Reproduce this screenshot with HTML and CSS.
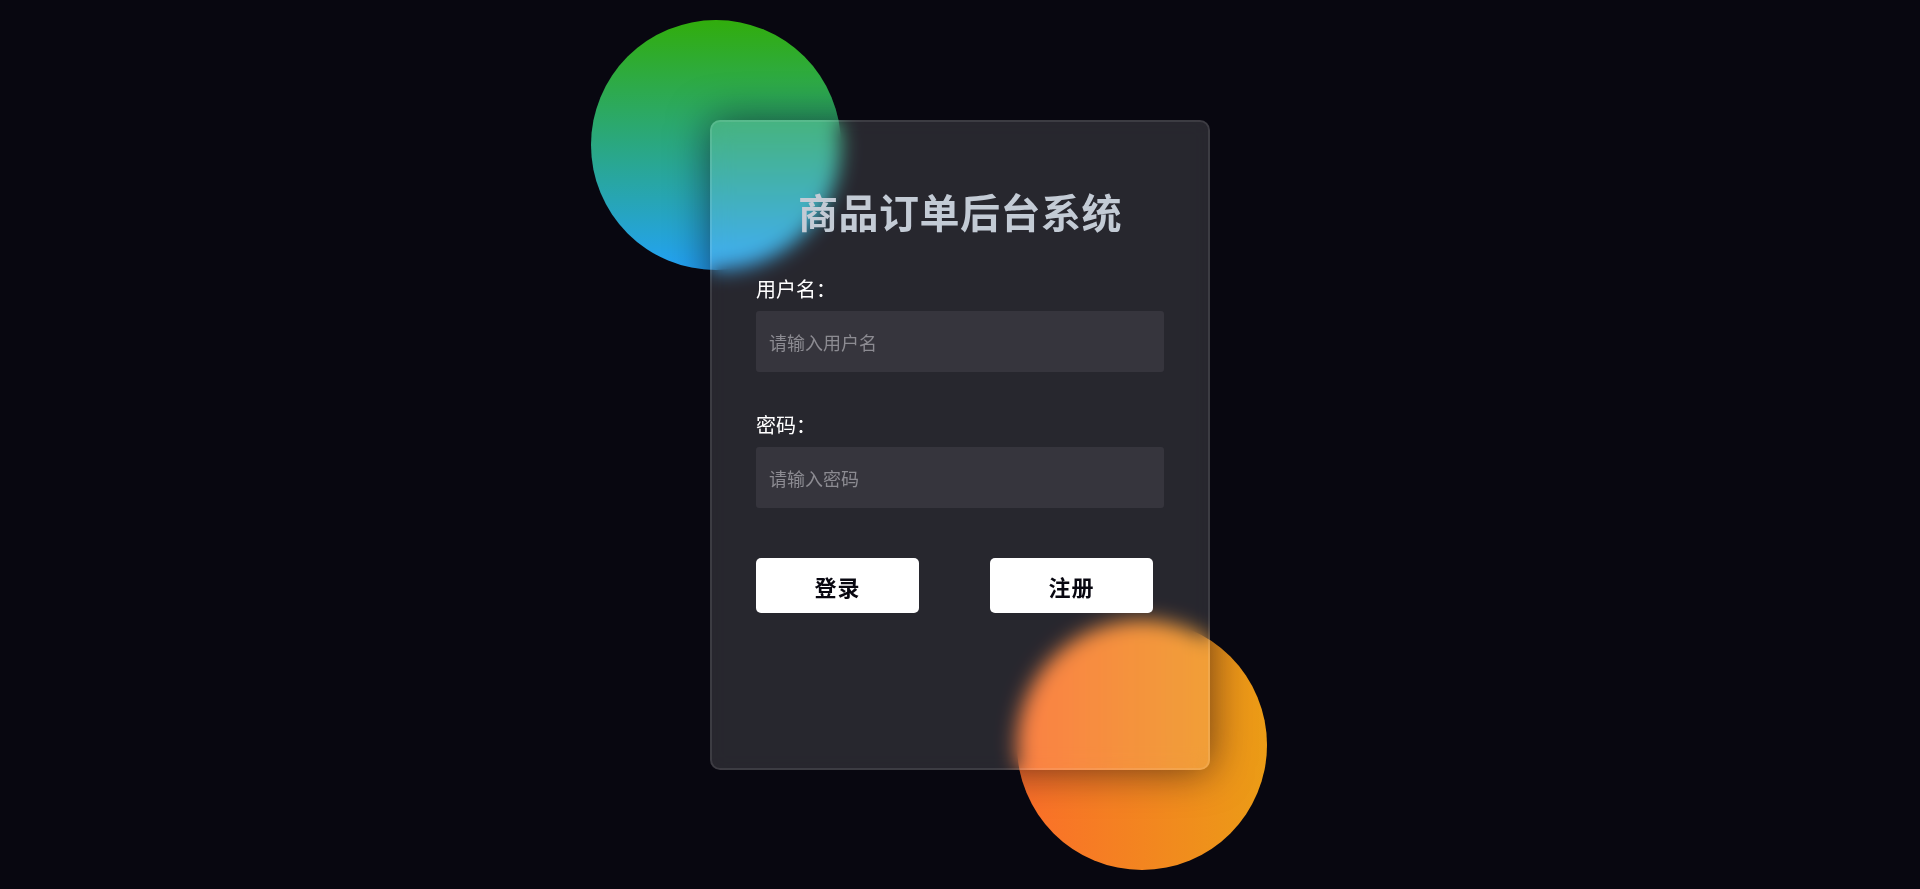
FILE: index.html
```html
<!DOCTYPE html>
<html lang="zh-CN">
<head>
<meta charset="UTF-8">
<title>商品订单后台系统</title>
<link rel="stylesheet" href="styles.css">
</head>
<body>
<div class="stage">
  <div class="backdrop">
    <div class="shape shape-green"></div>
    <div class="shape shape-orange"></div>
  </div>
  <form class="card">
    <h3 class="title">商品订单后台系统</h3>
    <label class="label" for="username">用户名：</label>
    <input class="field" id="username" type="text" placeholder="请输入用户名">
    <label class="label label-second" for="password">密码：</label>
    <input class="field" id="password" type="password" placeholder="请输入密码">
    <div class="actions">
      <button class="btn" type="button">登录</button>
      <button class="btn" type="button">注册</button>
    </div>
  </form>
</div>
</body>
</html>
```

FILE: styles.css
```css
* {
  margin: 0;
  padding: 0;
  box-sizing: border-box;
}

html, body {
  width: 100%;
  height: 100%;
}

body {
  background: #080710;
  font-family: "Noto Sans CJK SC", "Noto Sans", sans-serif;
  overflow: hidden;
}

.stage {
  position: relative;
  width: 100%;
  height: 100%;
}

.backdrop {
  position: absolute;
  width: 500px;
  height: 650px;
  left: 710px;
  top: 120px;
}

.shape {
  position: absolute;
  width: 250px;
  height: 250px;
  border-radius: 50%;
  overflow: hidden;
}

.shape::after {
  content: "";
  position: absolute;
  width: 500px;
  height: 650px;
  border-radius: 10px;
  box-shadow: 0 0 40px rgba(8, 7, 16, 0.6);
}

.shape-green {
  background: linear-gradient(#31ad0c, #23a2f6);
  left: -119px;
  top: -100px;
}

.shape-green::after {
  left: 119px;
  top: 100px;
}

.shape-orange {
  background: linear-gradient(to right, #fb6e2a, #eb9c16);
  left: 307px;
  top: 500px;
}

.shape-orange::after {
  left: -307px;
  top: -500px;
}

.card {
  position: absolute;
  width: 500px;
  height: 650px;
  left: 710px;
  top: 120px;
  background: rgba(255, 255, 255, 0.13);
  -webkit-backdrop-filter: blur(10px);
  backdrop-filter: blur(10px);
  border: 2px solid rgba(255, 255, 255, 0.1);
  border-radius: 10px;
  padding: 65px 44px 0;
  display: flex;
  flex-direction: column;
}

.title {
  font-size: 40px;
  font-weight: 700;
  line-height: 48px;
  text-align: center;
  color: #c3cbd5;
  letter-spacing: 0.5px;
}

.label {
  display: block;
  margin-top: 42px;
  font-size: 20px;
  line-height: 24px;
  color: #ffffff;
}

.label-second {
  margin-top: 41px;
}

.field {
  display: block;
  margin-top: 10px;
  width: 100%;
  height: 61px;
  background: rgba(255, 255, 255, 0.07);
  border: none;
  border-radius: 3px;
  padding: 0 13px;
  font-family: inherit;
  font-size: 18px;
  color: #ffffff;
  outline: none;
}

.field::placeholder {
  color: #8c8b92;
}

.actions {
  display: flex;
  gap: 71px;
  margin-top: 50px;
}

.btn {
  width: 163px;
  height: 55px;
  background: #ffffff;
  color: #080710;
  border: none;
  border-radius: 5px;
  font-family: inherit;
  font-size: 22px;
  font-weight: 700;
  letter-spacing: 1px;
  cursor: pointer;
}
```
